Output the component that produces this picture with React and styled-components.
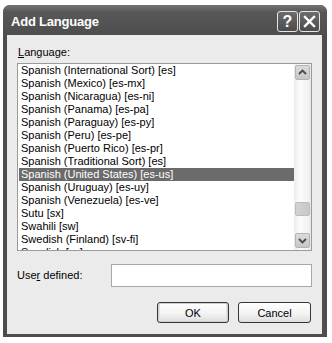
import React from 'react';
import styled, { createGlobalStyle } from 'styled-components';

const GlobalStyle = createGlobalStyle`
  body {
    margin: 0;
    background: #fff;
    font-family: "Liberation Sans", Arial, sans-serif;
  }
`;

const Window = styled.div`
  margin: 5px 0 0 3px;
  width: 324px;
  height: 332px;
  display: flex;
  flex-direction: column;
  background: #4d4d4d;
  border-radius: 7px 7px 0 0;
  overflow: hidden;
`;

const TitleBar = styled.div`
  height: 30px;
  flex: none;
  display: flex;
  align-items: flex-start;
  padding: 6px 7px 0 8px;
  box-sizing: border-box;
  background: linear-gradient(#727272, #575757 25%, #4e4e4e);
`;

const Title = styled.div`
  flex: 1;
  color: #fff;
  font-weight: bold;
  font-size: 13px;
  letter-spacing: -0.2px;
  line-height: 21px;
`;

const CaptionButtons = styled.div`
  display: flex;
  gap: 1px;
`;

const CaptionButton = styled.div`
  width: 21px;
  height: 21px;
  box-sizing: border-box;
  border: 1px solid #e6e6e6;
  border-radius: 3px;
  background: linear-gradient(#6c6c6c, #4c4c4c);
  color: #fff;
  display: flex;
  align-items: center;
  justify-content: center;
  font-weight: bold;
  font-size: 16px;
`;

const Body = styled.div`
  flex: 1;
  margin: 0 5px 3px 4px;
  padding: 11px 10px 11px 10px;
  background: #ebebeb;
  display: flex;
  flex-direction: column;
  font-size: 11px;
  color: #000;
`;

const Label = styled.div`
  line-height: 13px;
  height: 13px;
  padding-left: 1px;
`;

const ListBox = styled.div`
  margin-top: 4px;
  height: 188px;
  box-sizing: border-box;
  border: 1px solid #9a9a9a;
  background: #fff;
  display: flex;
`;

const Items = styled.div`
  flex: 1;
  overflow: hidden;
  padding-left: 1px;
`;

const Row = styled.div`
  height: 13px;
  line-height: 13px;
  padding-left: 2px;
  white-space: nowrap;
  background: ${(p) => (p.$selected ? '#6b6b6b' : 'transparent')};
  color: ${(p) => (p.$selected ? '#fff' : '#000')};
`;

const ScrollBar = styled.div`
  width: 17px;
  flex: none;
  box-sizing: border-box;
  padding: 1px 1px 2px 1px;
  display: flex;
  flex-direction: column;
  background: linear-gradient(90deg, #ececec, #fbfbfb 35%, #f4f4f4 80%, #e8e8e8);
`;

const ScrollButton = styled.div`
  width: 15px;
  height: 15px;
  box-sizing: border-box;
  border: 1px solid #b4b4b4;
  border-radius: 2px;
  background: linear-gradient(#dcdcdc, #c6c6c6);
  display: flex;
  align-items: center;
  justify-content: center;
  margin-top: ${(p) => (p.$bottom ? 'auto' : '0')};
`;

const Thumb = styled.div`
  width: 15px;
  height: 14px;
  box-sizing: border-box;
  margin-top: 122px;
  border: 1px solid #bcbcbc;
  border-radius: 2px;
  background: linear-gradient(90deg, #d2d2d2, #c8c8c8);
`;

const UserRow = styled.div`
  margin-top: 13px;
  display: flex;
  align-items: center;
`;

const UserLabel = styled.div`
  width: 94px;
  flex: none;
  line-height: 13px;
`;

const TextInput = styled.input`
  flex: 1;
  height: 23px;
  box-sizing: border-box;
  border: 1px solid #a8a8a8;
  background: #fff;
  margin: 0;
  outline: none;
`;

const ButtonRow = styled.div`
  margin-top: 15px;
  display: flex;
  justify-content: flex-end;
  gap: 9px;
  padding-right: 1px;
`;

const Button = styled.button`
  width: ${(p) => p.$width}px;
  height: 21px;
  padding: 0;
  box-sizing: border-box;
  border: 1px solid #363636;
  border-radius: 3px;
  background: linear-gradient(#ffffff, #f3f3f3 55%, #dedede);
  box-shadow: ${(p) => (p.$default ? 'inset 0 0 0 1px #cfcfcf, inset 0 -1px 0 2px #e2e2e2' : 'none')};
  font-family: "Liberation Sans", Arial, sans-serif;
  font-size: 11px;
  color: #000;
`;

function Chevron({ down }) {
  return (
    <svg width="9" height="7" viewBox="0 0 9 7">
      <path
        d={down ? 'M1 2l3.5 3.5L8 2' : 'M1 5l3.5-3.5L8 5'}
        fill="none"
        stroke="#4a4a4a"
        strokeWidth="1.8"
      />
    </svg>
  );
}

function CloseIcon() {
  return (
    <svg width="13" height="13" viewBox="0 0 13 13">
      <path d="M2 2l9 9M11 2l-9 9" stroke="#fff" strokeWidth="2.4" strokeLinecap="square" />
    </svg>
  );
}

const languages = [
  'Spanish (International Sort) [es]',
  'Spanish (Mexico) [es-mx]',
  'Spanish (Nicaragua) [es-ni]',
  'Spanish (Panama) [es-pa]',
  'Spanish (Paraguay) [es-py]',
  'Spanish (Peru) [es-pe]',
  'Spanish (Puerto Rico) [es-pr]',
  'Spanish (Traditional Sort) [es]',
  'Spanish (United States) [es-us]',
  'Spanish (Uruguay) [es-uy]',
  'Spanish (Venezuela) [es-ve]',
  'Sutu [sx]',
  'Swahili [sw]',
  'Swedish (Finland) [sv-fi]',
  'Swedish [sv]',
];

export default function App() {
  return (
    <>
      <GlobalStyle />
      <Window>
        <TitleBar>
          <Title>Add Language</Title>
          <CaptionButtons>
            <CaptionButton>?</CaptionButton>
            <CaptionButton>
              <CloseIcon />
            </CaptionButton>
          </CaptionButtons>
        </TitleBar>
        <Body>
          <Label>
            <u>L</u>anguage:
          </Label>
          <ListBox>
            <Items>
              {languages.map((name) => (
                <Row key={name} $selected={name === 'Spanish (United States) [es-us]'}>
                  {name}
                </Row>
              ))}
            </Items>
            <ScrollBar>
              <ScrollButton>
                <Chevron />
              </ScrollButton>
              <Thumb />
              <ScrollButton $bottom>
                <Chevron down />
              </ScrollButton>
            </ScrollBar>
          </ListBox>
          <UserRow>
            <UserLabel>
              Use<u>r</u> defined:
            </UserLabel>
            <TextInput />
          </UserRow>
          <ButtonRow>
            <Button $width={72} $default>
              OK
            </Button>
            <Button $width={73}>Cancel</Button>
          </ButtonRow>
        </Body>
      </Window>
    </>
  );
}
